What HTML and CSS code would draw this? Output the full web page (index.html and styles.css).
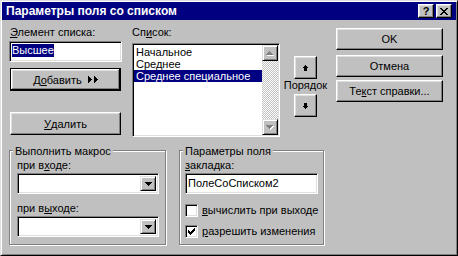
FILE: index.html
```html
<!DOCTYPE html>
<html>
<head>
  <meta charset="utf-8">
  <link rel="stylesheet" href="styles.css">
</head>
<body>
  <div class="window">
    <div class="titlebar">
      <span class="title">Параметры поля со списком</span>
      <div class="title-buttons">
        <span class="tbtn help">?</span>
        <span class="tbtn close">
          <svg width="8" height="7" viewBox="0 0 8 7"><path d="M0 0h2v1h-2z M6 0h2v1h-2z M1 1h2v1h-2z M5 1h2v1h-2z M2 2h4v1h-4z M3 3h2v1h-2z M2 4h4v1h-4z M1 5h2v1h-2z M5 5h2v1h-2z M0 6h2v1h-2z M6 6h2v1h-2z" fill="#000"/></svg>
        </span>
      </div>
    </div>

    <div class="content">
      <div class="top">
        <div class="col-left">
          <div class="label item-label"><u>Э</u>лемент списка:</div>
          <div class="field item-field"><span class="sel">Высшее</span></div>
          <button class="btn default add">Д<u>о</u>бавить
            <svg class="add-arrows" width="10" height="7" viewBox="0 0 10 7"><path d="M0 0h1v7h-1z M1 1h1v5h-1z M2 2h1v3h-1z M3 3h1v1h-1z M6 0h1v7h-1z M7 1h1v5h-1z M8 2h1v3h-1z M9 3h1v1h-1z" fill="#000"/></svg>
          </button>
          <button class="btn remove"><u>У</u>далить</button>
        </div>

        <div class="col-list">
          <div class="label">Сп<u>и</u>сок:</div>
          <div class="field listbox">
            <div class="list-items">
              <div class="list-item">Начальное</div>
              <div class="list-item">Среднее</div>
              <div class="list-item selected">Среднее специальное</div>
            </div>
            <div class="scrollbar">
              <div class="sb-btn">
                <svg width="8" height="5" viewBox="0 0 8 5"><path d="M4 1h1v1h-1z M3 2h3v1h-3z M2 3h5v1h-5z M1 4h7v1h-7z" fill="#fff"/><path d="M3 0h1v1h-1z M2 1h3v1h-3z M1 2h5v1h-5z M0 3h7v1h-7z" fill="#808080"/></svg>
              </div>
              <div class="sb-track"></div>
              <div class="sb-btn">
                <svg width="8" height="5" viewBox="0 0 8 5"><path d="M1 1h7v1h-7z M2 2h5v1h-5z M3 3h3v1h-3z M4 4h1v1h-1z" fill="#fff"/><path d="M0 0h7v1h-7z M1 1h5v1h-5z M2 2h3v1h-3z M3 3h1v1h-1z" fill="#808080"/></svg>
              </div>
            </div>
          </div>
        </div>

        <div class="col-order">
          <button class="btn order">
            <svg width="5" height="6" viewBox="0 0 5 6"><path d="M2 0h1v1h-1z M1 1h3v1h-3z M0 2h5v1h-5z M1 3h3v3h-3z" fill="#000"/></svg>
          </button>
          <div class="order-label">Порядок</div>
          <button class="btn order down">
            <svg width="5" height="6" viewBox="0 0 5 6"><path d="M1 0h3v3h-3z M0 3h5v1h-5z M1 4h3v1h-3z M2 5h1v1h-1z" fill="#000"/></svg>
          </button>
        </div>

        <div class="col-buttons">
          <button class="btn ok">OK</button>
          <button class="btn cancel">Отмена</button>
          <button class="btn help-text">Те<u>к</u>ст справки...</button>
        </div>
      </div>

      <div class="bottom">
        <div class="group macro">
          <div class="group-title">Выполнить макрос</div>
          <div class="group-body">
            <div class="label">при в<u>х</u>оде:</div>
            <div class="field combo">
              <div class="combo-btn">
                <svg width="7" height="4" viewBox="0 0 7 4"><path d="M0 0h7v1h-7z M1 1h5v1h-5z M2 2h3v1h-3z M3 3h1v1h-1z" fill="#000"/></svg>
              </div>
            </div>
            <div class="label second">при в<u>ы</u>ходе:</div>
            <div class="field combo">
              <div class="combo-btn">
                <svg width="7" height="4" viewBox="0 0 7 4"><path d="M0 0h7v1h-7z M1 1h5v1h-5z M2 2h3v1h-3z M3 3h1v1h-1z" fill="#000"/></svg>
              </div>
            </div>
          </div>
        </div>

        <div class="group params">
          <div class="group-title">Параметры поля</div>
          <div class="group-body">
            <div class="label"><u>з</u>акладка:</div>
            <div class="field bookmark">ПолеСоСписком2</div>
            <div class="check-row first">
              <span class="field check"></span>
              <span><u>в</u>ычислить при выходе</span>
            </div>
            <div class="check-row">
              <span class="field check">
                <svg width="7" height="7" viewBox="0 0 7 7"><path d="M6 0h1v1h-1z M5 1h2v1h-2z M0 2h1v1h-1z M4 2h3v1h-3z M0 3h2v1h-2z M3 3h3v1h-3z M0 4h5v1h-5z M1 5h3v1h-3z M2 6h1v1h-1z" fill="#000"/></svg>
              </span>
              <span><u>р</u>азрешить изменения</span>
            </div>
          </div>
        </div>
      </div>
    </div>
  </div>
</body>
</html>
```

FILE: styles.css
```css
* {
  box-sizing: border-box;
}

body {
  margin: 0;
  font-family: "Liberation Sans", Arial, sans-serif;
  font-size: 11px;
  color: #000000;
}

u {
  text-underline-offset: 1px;
}

.window {
  width: 458px;
  height: 256px;
  background: #C0C0C0;
  border: 1px solid;
  border-color: #DFDFDF #000000 #000000 #DFDFDF;
  box-shadow: inset 1px 1px #FFFFFF, inset -1px -1px #808080;
  padding: 1px;
}

.titlebar {
  height: 18px;
  background: #000080;
  color: #FFFFFF;
  display: flex;
  align-items: center;
  justify-content: space-between;
  padding: 0 4px 0 4px;
}

.title {
  font-weight: bold;
  font-size: 12px;
  white-space: nowrap;
}

.title-buttons {
  display: flex;
  gap: 2px;
}

.tbtn {
  width: 16px;
  height: 14px;
  background: #C0C0C0;
  border: 1px solid;
  border-color: #FFFFFF #000000 #000000 #FFFFFF;
  box-shadow: inset -1px -1px #808080, inset 1px 1px #DFDFDF;
  display: flex;
  align-items: center;
  justify-content: center;
  color: #000000;
  font-weight: bold;
  font-size: 11px;
  line-height: 11px;
}

.content {
  padding: 6px 0 0 7px;
}

.top {
  display: flex;
  align-items: flex-start;
}

.label {
  height: 13px;
  line-height: 13px;
  white-space: nowrap;
}

/* 3d borders */
.field {
  background: #FFFFFF;
  border: 1px solid;
  border-color: #808080 #FFFFFF #FFFFFF #808080;
  box-shadow: inset 1px 1px #000000, inset -1px -1px #DFDFDF;
}

.btn {
  display: flex;
  align-items: center;
  justify-content: center;
  padding: 0;
  margin: 0;
  background: #C0C0C0;
  font-family: "Liberation Sans", Arial, sans-serif;
  font-size: 11px;
  color: #000000;
  border: 1px solid;
  border-color: #FFFFFF #000000 #000000 #FFFFFF;
  box-shadow: inset -1px -1px #808080, inset 1px 1px #DFDFDF;
  white-space: nowrap;
}

.btn.default {
  border-color: #000000;
  box-shadow: inset -1px -1px #000000, inset 1px 1px #FFFFFF, inset -2px -2px #808080, inset 2px 2px #DFDFDF;
}

/* left column */
.col-left {
  width: 113px;
  display: flex;
  flex-direction: column;
}

.item-label {
  padding-left: 1px;
}

.item-field {
  margin-top: 2px;
  height: 21px;
  padding: 2px;
}

.sel {
  display: inline-block;
  background: #000080;
  color: #FFFFFF;
  line-height: 13px;
}

.add,
.remove {
  margin-left: 1px;
  width: 111px;
  height: 23px;
}

.add {
  margin-top: 6px;
}

.add-arrows {
  margin-left: 6px;
}

.remove {
  margin-top: 21px;
}

/* list */
.col-list {
  margin-left: 10px;
  width: 148px;
}

.listbox {
  margin-top: 4px;
  height: 94px;
  padding: 1px;
  display: flex;
}

.list-items {
  flex: 1;
  padding-top: 1px;
}

.list-item {
  height: 12px;
  line-height: 12px;
  padding-left: 2px;
  white-space: nowrap;
}

.list-item.selected {
  background: #000080;
  color: #FFFFFF;
}

.scrollbar {
  width: 16px;
  display: flex;
  flex-direction: column;
}

.sb-btn {
  width: 16px;
  height: 16px;
  background: #C0C0C0;
  border: 1px solid;
  border-color: #DFDFDF #000000 #000000 #DFDFDF;
  box-shadow: inset 1px 1px #FFFFFF, inset -1px -1px #808080;
  display: flex;
  align-items: center;
  justify-content: center;
}

.sb-track {
  flex: 1;
  background-image: repeating-conic-gradient(#FFFFFF 0 25%, #C0C0C0 0 50%);
  background-size: 2px 2px;
}

/* order */
.col-order {
  margin-left: 3px;
  width: 45px;
  padding-top: 30px;
  display: flex;
  flex-direction: column;
  align-items: center;
}

.order {
  width: 23px;
  height: 23px;
}

.order-label {
  line-height: 13px;
  white-space: nowrap;
}

.order.down {
  margin-top: 2px;
}

/* dialog buttons */
.col-buttons {
  margin-left: 8px;
  width: 107px;
  padding-top: 2px;
  display: flex;
  flex-direction: column;
}

.col-buttons .btn {
  width: 107px;
  height: 22px;
}

.cancel {
  margin-top: 5px;
}

.help-text {
  margin-top: 3px;
}

/* groups */
.bottom {
  display: flex;
  margin-top: 13px;
}

.group {
  height: 95px;
  border: 1px solid #808080;
  box-shadow: inset 1px 1px #FFFFFF, 1px 1px #FFFFFF;
}

.macro {
  width: 157px;
}

.params {
  width: 145px;
  margin-left: 13px;
}

.group-title {
  width: max-content;
  margin: -6px 0 0 3px;
  padding: 0 2px;
  background: #C0C0C0;
  line-height: 13px;
}

.group-body {
  display: flex;
  flex-direction: column;
}

.macro .group-body {
  padding-left: 7px;
}

.params .group-body {
  padding-left: 5px;
}

.group-body .label {
  margin-top: 1px;
}

.group-body .label.second {
  margin-top: 8px;
}

.combo {
  margin-top: 1px;
  width: 142px;
  height: 21px;
  padding: 2px;
  display: flex;
  justify-content: flex-end;
}

.combo-btn {
  width: 16px;
  height: 100%;
  background: #C0C0C0;
  border: 1px solid;
  border-color: #DFDFDF #000000 #000000 #DFDFDF;
  box-shadow: inset 1px 1px #FFFFFF, inset -1px -1px #808080;
  display: flex;
  align-items: center;
  justify-content: center;
}

.bookmark {
  margin-top: 1px;
  width: 133px;
  height: 21px;
  padding: 0 2px;
  display: flex;
  align-items: center;
  line-height: 13px;
}

.check-row {
  display: flex;
  align-items: center;
  gap: 4px;
  height: 13px;
  margin-top: 8px;
  line-height: 13px;
  white-space: nowrap;
}

.check-row.first {
  margin-top: 10px;
}

.check {
  width: 13px;
  height: 13px;
  flex: none;
  display: flex;
  align-items: center;
  justify-content: center;
}
```
